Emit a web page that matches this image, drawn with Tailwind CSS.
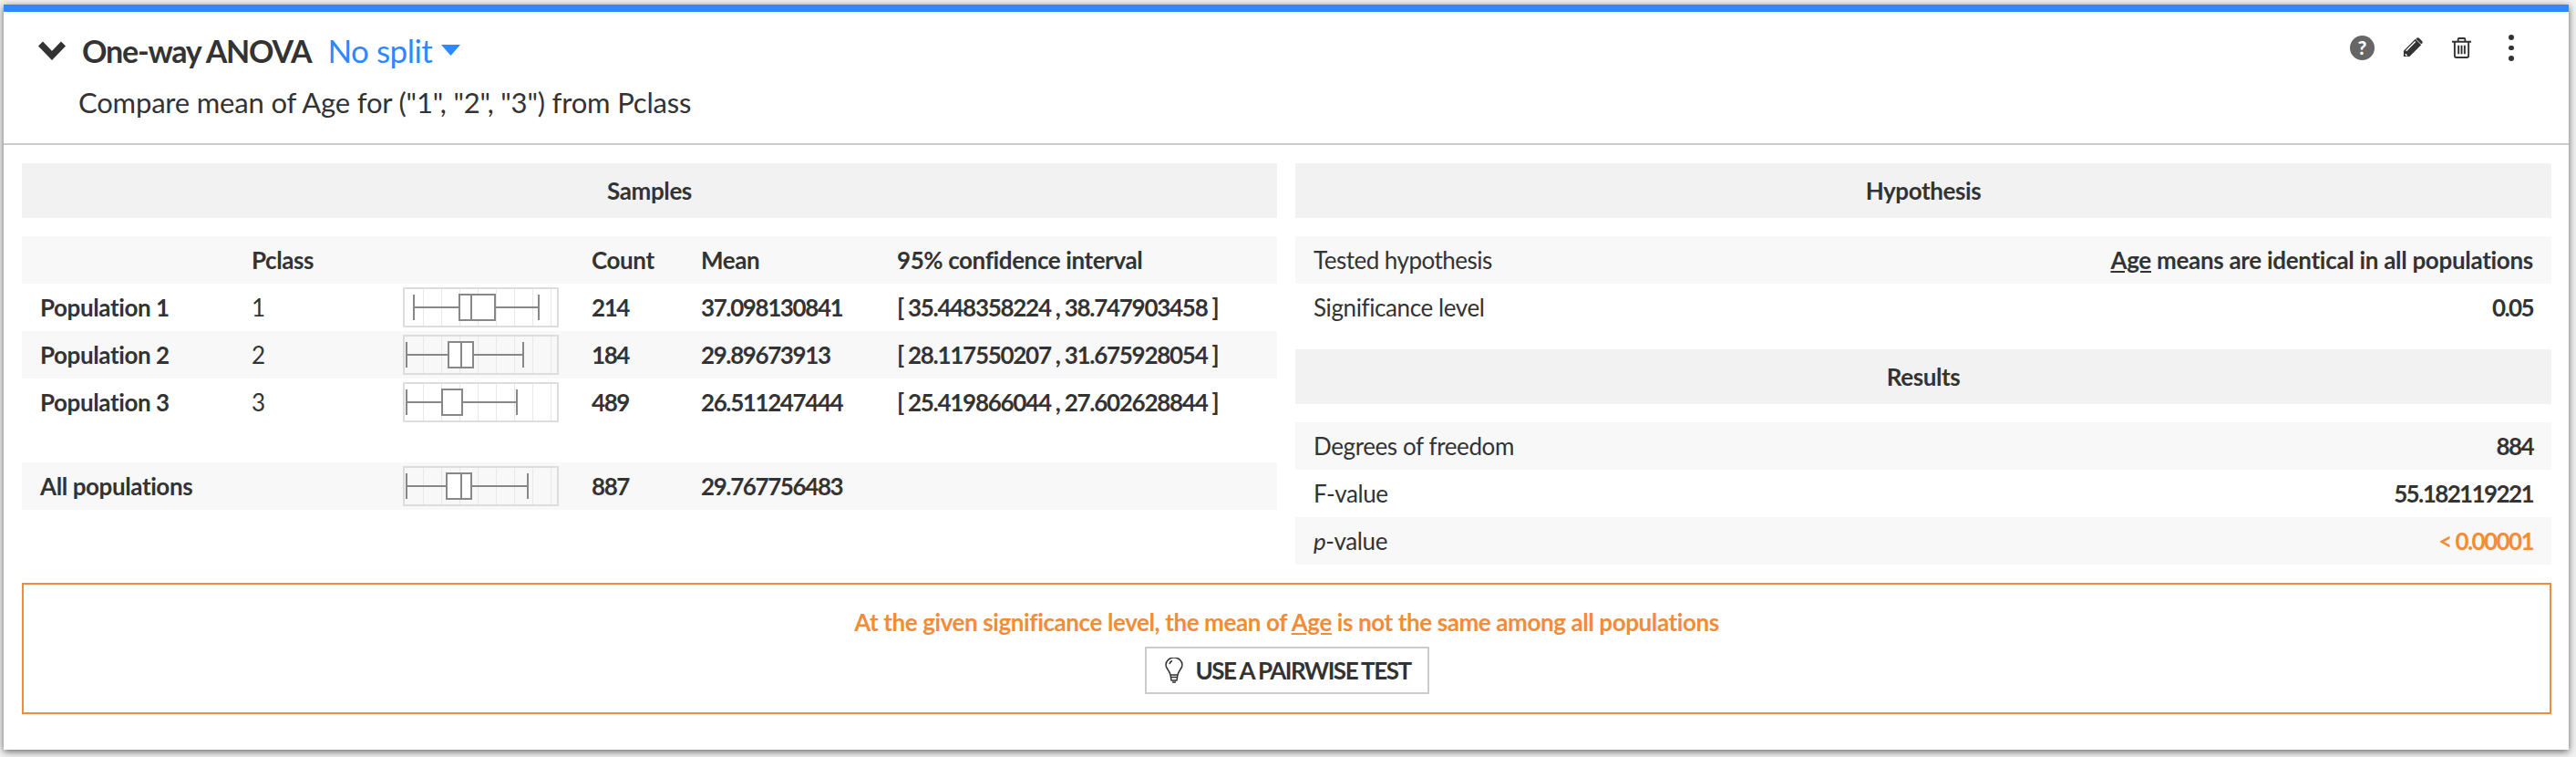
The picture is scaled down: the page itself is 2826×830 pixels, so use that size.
<!DOCTYPE html>
<html lang="en">
  <head>
    <meta charset="UTF-8" />
    <title>One-way ANOVA</title>
    <script src="https://cdn.jsdelivr.net/npm/@tailwindcss/browser@4"></script>
  </head>
  <body class="bg-[#f2f2f2] font-['Lato',sans-serif] text-[#333] overflow-hidden">
    <div class="w-[2826px] h-[830px] pt-[5px] pl-[4px] pr-[8px]">
      <section class="bg-white h-[817px] border-t-[8px] border-[#2f88ff] shadow-[0_2px_8px_rgba(0,0,0,0.6)]">
        <!-- Header -->
        <header class="relative h-[146px] border-b-2 border-[#ccc]">
          <div class="flex items-center h-[60px] pt-[24px] pl-[37px]">
            <svg width="32" height="22" viewBox="0 0 32 22" class="mr-[17px]"><path d="M3.5 4 L16 17 L28.5 4" fill="none" stroke="#333" stroke-width="7"/></svg>
            <h2 class="text-[34px] font-bold tracking-[-1.2px]">One-way ANOVA</h2>
            <span class="ml-[18px] text-[35px] text-[#2f88ff] tracking-[-0.5px]">No split</span>
            <svg width="21" height="12" viewBox="0 0 21 12" class="ml-[10px]"><path d="M0 0 H21 L10.5 12 Z" fill="#2f88ff"/></svg>
          </div>
          <p class="pl-[82px] mt-[16px] text-[31px] tracking-[-0.18px]">Compare mean of Age for ("1", "2", "3") from Pclass</p>
          <div class="absolute top-[25px] left-[2574px] flex items-center">
            <svg width="27" height="27" viewBox="0 0 28 28"><circle cx="14" cy="14" r="14" fill="#666"/><text x="14" y="22" text-anchor="middle" font-size="22" font-weight="900" font-family="Lato" fill="#fff">?</text></svg>
            <svg width="22" height="22" viewBox="0 0 24 24" class="ml-[31px]"><path d="M1 23 V16 L15 2 L22 9 L8 23 Z M16.5 .8 Q18 -.5 19.5 .8 L23 4.3 Q24.3 5.8 23 7.3 L22 8 L15.8 2 Z" fill="#333"/><path d="M4 16 L15 5 M3 20 L5 22" stroke="#fff" stroke-width="1.5"/></svg>
            <svg width="21" height="23" viewBox="0 0 22 24" class="ml-[32px]" fill="none" stroke="#333" stroke-width="2"><path d="M0 5 H22 M7 5 V2 Q7 1 8 1 H14 Q15 1 15 2 V5 M3 5 V21 Q3 23 5 23 H17 Q19 23 19 21 V5"/><path d="M7.5 9 V19 M11 9 V19 M14.5 9 V19"/></svg>
            <div class="ml-[41px] flex flex-col gap-[6px]">
              <span class="w-[5.5px] h-[5.5px] rounded-full bg-[#333]"></span>
              <span class="w-[5.5px] h-[5.5px] rounded-full bg-[#333]"></span>
              <span class="w-[5.5px] h-[5.5px] rounded-full bg-[#333]"></span>
            </div>
          </div>
        </header>

        <main class="pl-5 pr-[19px]">
          <div class="flex gap-5 pt-5">
            <!-- Samples -->
            <div class="w-[1377px]">
              <h3 class="h-[60px] flex items-center justify-center bg-[#f2f2f2] text-[26px] font-bold tracking-[-0.4px]">Samples</h3>
              <div class="mt-5 text-[26px] font-bold tracking-[-0.4px]">
                <div class="grid grid-cols-[232px_166px_207px_120px_215px_1fr] h-[52px] items-center pl-5 bg-[#f8f8f8]">
                  <span></span><span>Pclass</span><span></span><span>Count</span><span>Mean</span><span>95% confidence interval</span>
                </div>
                <div class="grid grid-cols-[232px_166px_207px_120px_215px_1fr] h-[52px] items-center pl-5">
                  <span>Population 1</span><span class="font-normal">1</span>
                  <svg width="171" height="44" viewBox="0 0 171 44"><rect x="1" y="1" width="169" height="42" fill="none" stroke="#ddd" stroke-width="2"/><path d="M22.5 2 V42 M42.5 2 V42 M62.5 2 V42 M82.5 2 V42 M102.5 2 V42 M122.5 2 V42 M142.5 2 V42 M162.5 2 V42" stroke="#e8e8e8"/><path d="M12 22 H149 M12 8 V36 M149 8 V36" stroke="#888" stroke-width="2"/><rect x="62" y="8" width="39" height="28" fill="#fff" stroke="#888" stroke-width="2"/><path d="M75 8 V36" stroke="#888" stroke-width="2"/></svg>
                  <span class="tracking-[-1.4px]">214</span><span class="tracking-[-1.4px]">37.098130841</span><span class="tracking-[-1.27px]">[ 35.448358224 , 38.747903458 ]</span>
                </div>
                <div class="grid grid-cols-[232px_166px_207px_120px_215px_1fr] h-[52px] items-center pl-5 bg-[#f8f8f8]">
                  <span>Population 2</span><span class="font-normal">2</span>
                  <svg width="171" height="44" viewBox="0 0 171 44"><rect x="1" y="1" width="169" height="42" fill="none" stroke="#ddd" stroke-width="2"/><path d="M22.5 2 V42 M42.5 2 V42 M62.5 2 V42 M82.5 2 V42 M102.5 2 V42 M122.5 2 V42 M142.5 2 V42 M162.5 2 V42" stroke="#e8e8e8"/><path d="M4 22 H132 M4 8 V36 M132 8 V36" stroke="#888" stroke-width="2"/><rect x="50" y="8" width="27" height="28" fill="#fff" stroke="#888" stroke-width="2"/><path d="M64 8 V36" stroke="#888" stroke-width="2"/></svg>
                  <span class="tracking-[-1.4px]">184</span><span class="tracking-[-1.4px]">29.89673913</span><span class="tracking-[-1.27px]">[ 28.117550207 , 31.675928054 ]</span>
                </div>
                <div class="grid grid-cols-[232px_166px_207px_120px_215px_1fr] h-[52px] items-center pl-5">
                  <span>Population 3</span><span class="font-normal">3</span>
                  <svg width="171" height="44" viewBox="0 0 171 44"><rect x="1" y="1" width="169" height="42" fill="none" stroke="#ddd" stroke-width="2"/><path d="M22.5 2 V42 M42.5 2 V42 M62.5 2 V42 M82.5 2 V42 M102.5 2 V42 M122.5 2 V42 M142.5 2 V42 M162.5 2 V42" stroke="#e8e8e8"/><path d="M4 22 H125 M4 8 V36 M125 8 V36" stroke="#888" stroke-width="2"/><rect x="43" y="8" width="22" height="28" fill="#fff" stroke="#888" stroke-width="2"/></svg>
                  <span class="tracking-[-1.4px]">489</span><span class="tracking-[-1.4px]">26.511247444</span><span class="tracking-[-1.27px]">[ 25.419866044 , 27.602628844 ]</span>
                </div>
                <div class="grid grid-cols-[232px_166px_207px_120px_215px_1fr] h-[52px] items-center pl-5 bg-[#f8f8f8] mt-10">
                  <span>All populations</span><span></span>
                  <svg width="171" height="44" viewBox="0 0 171 44"><rect x="1" y="1" width="169" height="42" fill="none" stroke="#ddd" stroke-width="2"/><path d="M22.5 2 V42 M42.5 2 V42 M62.5 2 V42 M82.5 2 V42 M102.5 2 V42 M122.5 2 V42 M142.5 2 V42 M162.5 2 V42" stroke="#e8e8e8"/><path d="M4 22 H137 M4 8 V36 M137 8 V36" stroke="#888" stroke-width="2"/><rect x="48" y="8" width="27" height="28" fill="#fff" stroke="#888" stroke-width="2"/><path d="M64 8 V36" stroke="#888" stroke-width="2"/></svg>
                  <span class="tracking-[-1.4px]">887</span><span class="tracking-[-1.4px]">29.767756483</span><span></span>
                </div>
              </div>
            </div>

            <!-- Hypothesis and results -->
            <div class="flex-1 text-[26px] tracking-[-0.4px]">
              <h3 class="h-[60px] flex items-center justify-center bg-[#f2f2f2] font-bold">Hypothesis</h3>
              <div class="mt-5">
                <div class="flex justify-between items-center h-[52px] px-5 bg-[#f8f8f8]"><span class="tracking-[-0.5px]">Tested hypothesis</span><span class="font-bold tracking-[-0.3px]"><span class="underline">Age</span> means are identical in all populations</span></div>
                <div class="flex justify-between items-center h-[52px] px-5"><span>Significance level</span><span class="font-bold tracking-[-1.6px]">0.05</span></div>
              </div>
              <h3 class="mt-5 h-[60px] flex items-center justify-center bg-[#f2f2f2] font-bold">Results</h3>
              <div class="mt-5">
                <div class="flex justify-between items-center h-[52px] px-5 bg-[#f8f8f8]"><span>Degrees of freedom</span><span class="font-bold tracking-[-1.6px]">884</span></div>
                <div class="flex justify-between items-center h-[52px] px-5"><span>F-value</span><span class="font-bold tracking-[-1.6px]">55.182119221</span></div>
                <div class="flex justify-between items-center h-[52px] px-5 bg-[#f8f8f8]"><span><i>p</i>-value</span><span class="font-bold text-[#f28c38] tracking-[-1.6px]">&lt; 0.00001</span></div>
              </div>
            </div>
          </div>

          <!-- Conclusion -->
          <div class="mt-5 h-[144px] border-2 border-[#f28c38] flex flex-col items-center pt-[22px]">
            <p class="text-[26px] font-bold text-[#f28c38] tracking-[-0.4px]">At the given significance level, the mean of <span class="underline">Age</span> is not the same among all populations</p>
            <button class="mt-[7px] w-[312px] h-[52px] border-2 border-[#ccc] flex items-center pl-5 text-[26px] font-bold tracking-[-1.5px] whitespace-nowrap">
              <svg width="20" height="28" viewBox="0 0 20 28" fill="none" stroke="#333" stroke-width="1.5" class="mr-[14px]"><path d="M6 19 C5 14 1 12 1 8 A9 8 0 0 1 19 8 C19 12 15 14 14 19 Z M6 19 L7 25 H13 L14 19 M6.5 21.5 H13.5 M8 27 H12 M5 7 Q5.5 4.5 8 3.5"/></svg>
              USE A PAIRWISE TEST
            </button>
          </div>
        </main>
      </section>
    </div>
  </body>
</html>
